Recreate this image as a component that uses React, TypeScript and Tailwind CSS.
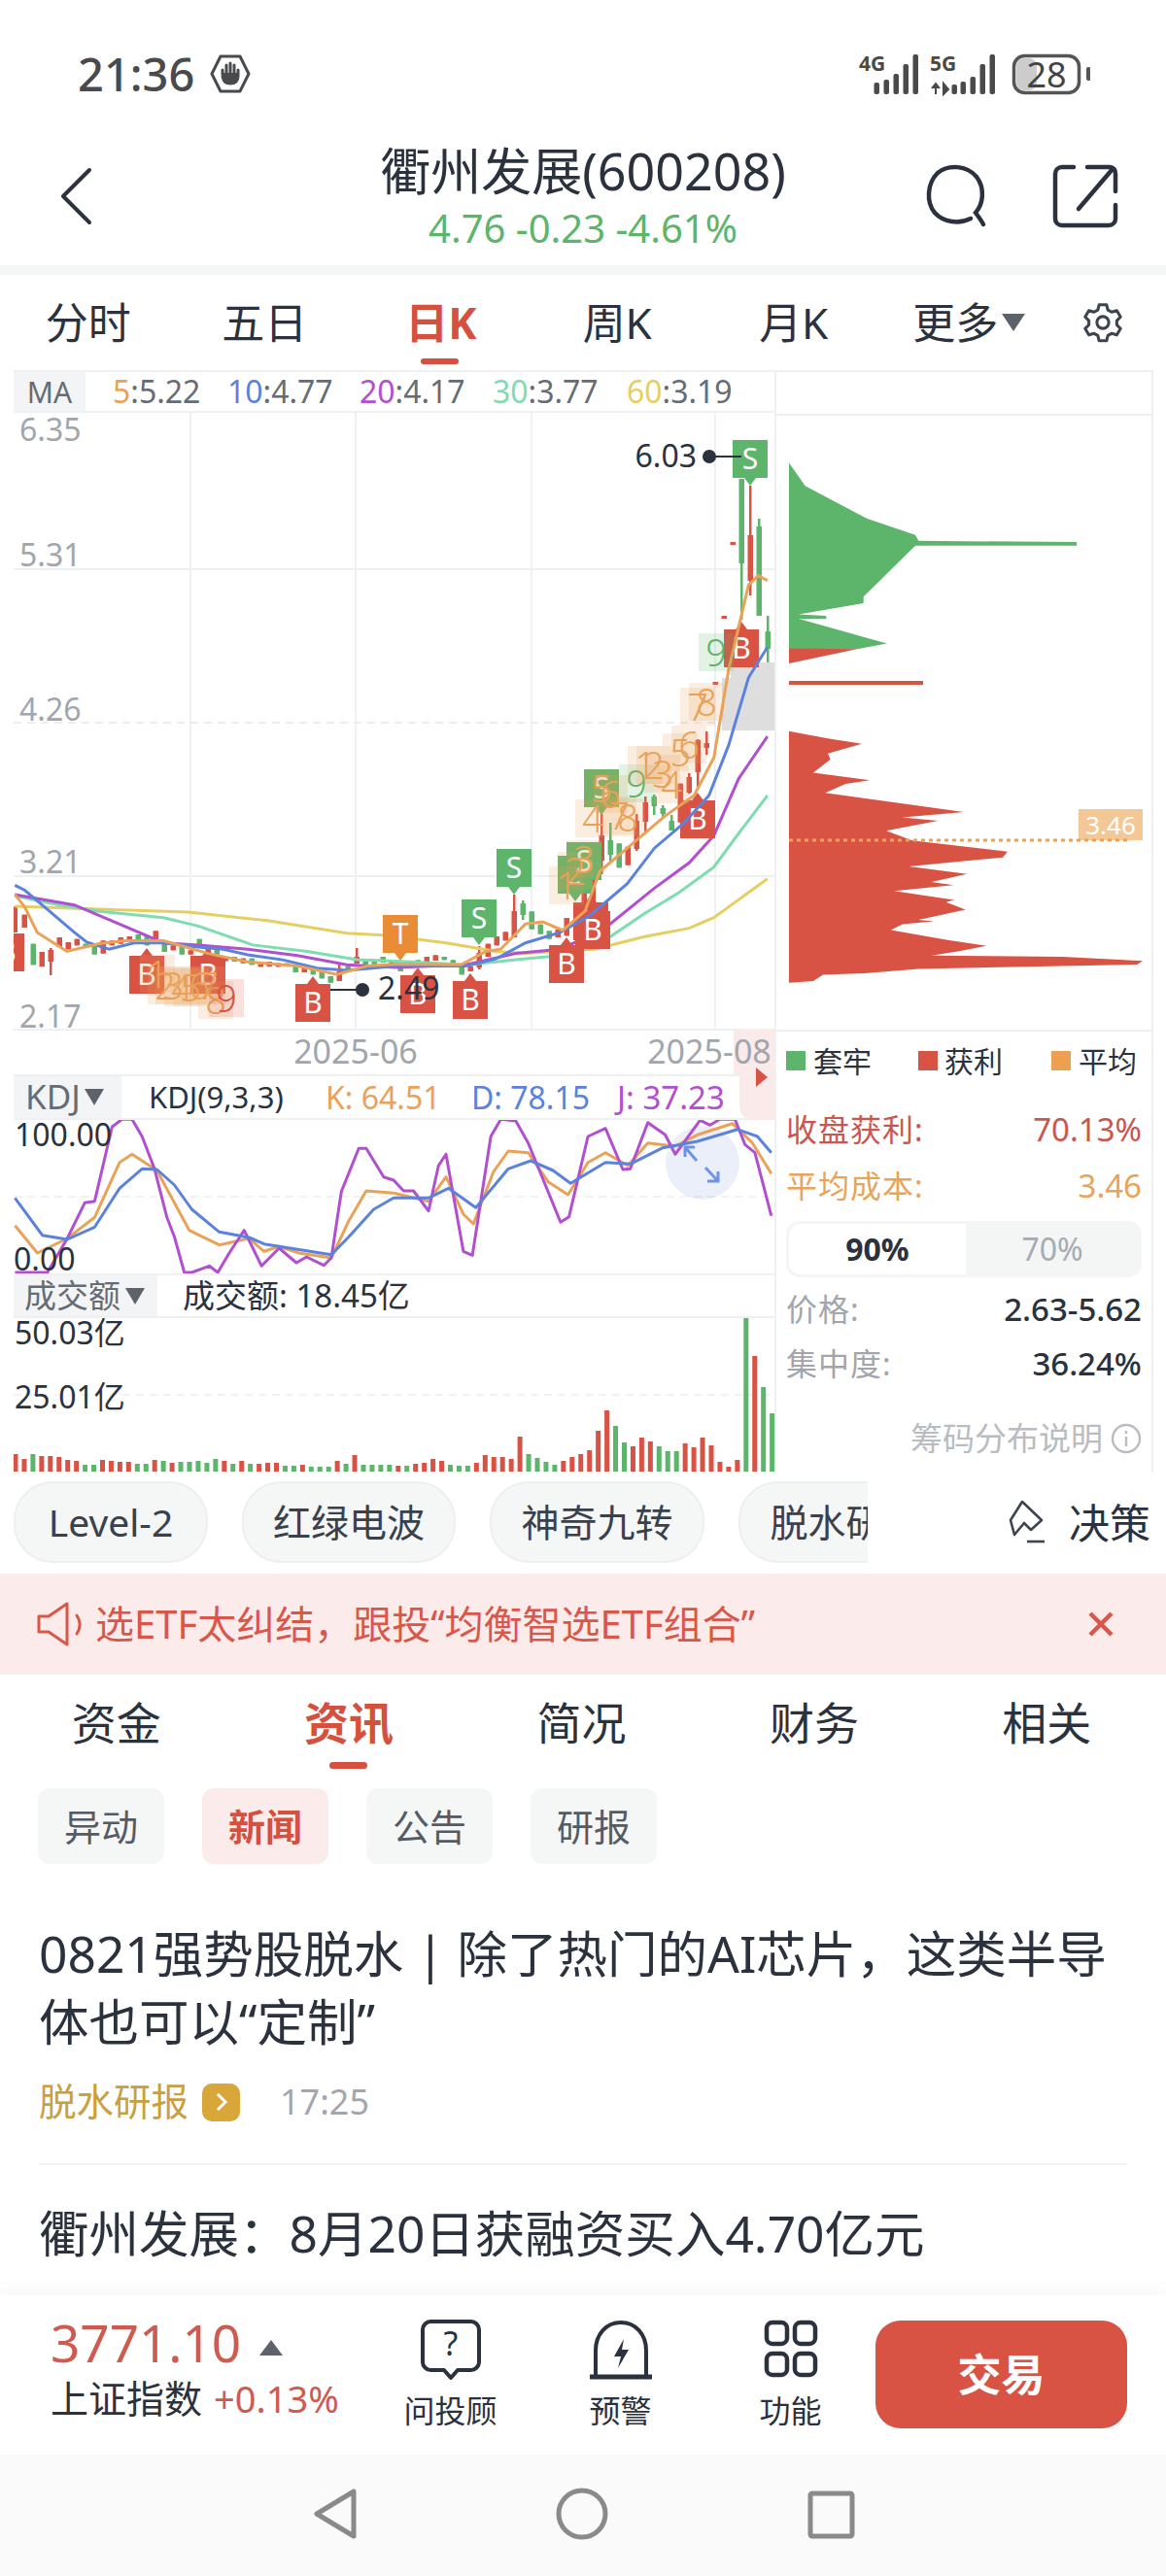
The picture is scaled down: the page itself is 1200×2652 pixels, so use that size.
import React from "react";

const R = "#d95345";
const G = "#5cb56a";
const O = "#e9a258";
const BL = "#5b82dc";
const PU = "#b24fd0";
const TE = "#7fdcb0";
const YE = "#e6cf62";
const INK = "#2b323d";

type P = [number, number];
const z2 = (a: P[]) => a.map(([x, y]) => `${(x / 1.96).toFixed(1)},${(420 + y / 2.306).toFixed(1)}`).join(" ");
const z4 = (a: P[]) => a.map(([x, y]) => `${(x / 1.95).toFixed(1)},${(1090 + y / 3).toFixed(1)}`).join(" ");
const z3 = (a: P[]) => a.map(([x, y]) => `${(780 + x / 3).toFixed(1)},${(380 + y / 2.178).toFixed(1)}`).join(" ");

const ma5: P[] = [[30,1155],[50,1185],[75,1245],[135,1290],[200,1272],[250,1265],[330,1265],[420,1295],[500,1315],[600,1325],[680,1345],[740,1325],[800,1320],[930,1322],[980,1290],[1010,1285],[1060,1225],[1095,1220],[1135,1240],[1180,1195],[1210,1100],[1260,1050],[1340,970],[1400,920],[1440,830],[1470,620],[1510,420],[1530,398],[1548,410]];
const ma10: P[] = [[30,1133],[50,1145],[100,1195],[150,1245],[175,1268],[220,1285],[270,1270],[330,1270],[400,1280],[450,1285],[500,1298],[570,1310],[640,1330],[700,1335],[800,1325],[940,1325],[1000,1308],[1060,1270],[1130,1245],[1190,1205],[1265,1130],[1320,1045],[1380,985],[1430,920],[1470,800],[1510,640],[1548,568]];
const ma20: P[] = [[30,1155],[150,1180],[240,1225],[330,1270],[400,1275],[500,1285],[600,1300],[700,1322],[800,1328],[940,1322],[1040,1295],[1130,1285],[1215,1240],[1320,1140],[1390,1080],[1440,1015],[1490,880],[1548,780]];
const ma30: P[] = [[30,1158],[120,1180],[200,1195],[330,1210],[400,1230],[510,1275],[620,1290],[720,1310],[800,1313],[940,1322],[1040,1310],[1130,1300],[1200,1280],[1300,1200],[1370,1150],[1440,1090],[1490,1010],[1548,920]];
const ma60: P[] = [[30,1183],[200,1190],[380,1197],[540,1217],[700,1247],[780,1252],[900,1270],[1000,1290],[1060,1295],[1200,1285],[1300,1255],[1390,1235],[1440,1210],[1548,1118]];

const kK: P[] = [[30,515],[75,600],[135,555],[190,490],[240,320],[265,295],[315,345],[380,530],[440,575],[500,555],[530,595],[560,580],[600,600],[665,615],[700,500],[735,408],[790,415],[860,440],[895,365],[930,480],[950,510],[990,350],[1020,285],[1060,290],[1100,380],[1140,420],[1180,320],[1215,290],[1260,330],[1300,260],[1355,270],[1400,235],[1470,200],[1510,260],[1548,355]];
const kD: P[] = [[30,430],[85,545],[135,558],[190,520],[240,400],[285,340],[315,342],[350,390],[385,465],[440,535],[500,552],[530,572],[665,605],[700,550],[750,465],[790,430],[860,430],[900,400],[955,460],[1020,340],[1065,315],[1110,345],[1145,385],[1215,320],[1265,325],[1330,275],[1400,255],[1480,218],[1520,240],[1548,290]];
const kJ: P[] = [[30,660],[95,660],[135,555],[170,445],[190,440],[225,210],[245,187],[265,187],[285,240],[310,340],[335,490],[350,550],[370,660],[385,660],[420,640],[437,660],[460,600],[490,530],[525,640],[560,585],[595,630],[615,612],[650,638],[665,615],[685,410],[720,277],[735,277],[770,365],[790,375],[810,408],[830,408],[860,470],[880,330],[895,295],[930,595],[948,607],[985,240],[1005,187],[1035,192],[1060,260],[1125,505],[1142,488],[1180,240],[1215,215],[1250,342],[1265,340],[1300,197],[1335,235],[1355,295],[1405,190],[1425,205],[1445,187],[1475,187],[1495,265],[1515,290],[1548,485]];

// x, top, bottom, colour, optional body top/bottom
type C = [number, number, number, string, number?, number?];
const z10 = (x: number, a: number, b: number, c: string): C => [x, 890 + a / 3, 890 + b / 3, c];
const z11 = z10;
const z9 = (x: number, a: number, b: number, c: string): C => [x, 740 + a / 3, 740 + b / 3, c];
const candles: C[] = [
  z10(15,130,210,R),z10(25,155,195,R),z10(34,245,310,G),z10(43,270,315,R),[52,976,1004,R,978,990],z10(61,225,255,R),z10(70,240,262,R),z10(79,230,250,R),z10(88,245,258,G),z10(97,252,278,G),z10(106,235,275,R),z10(115,235,250,R),z10(124,225,245,R),z10(133,222,235,R),z10(142,216,235,G),z10(151,220,250,G),z10(160,205,235,R),z10(169,245,270,G),z10(178,250,265,R),z10(187,252,278,G),z10(196,265,278,R),z10(205,230,258,G),z10(214,250,270,R),z10(223,262,315,G),z10(232,285,298,R),z10(241,285,300,G),z10(250,290,305,R),z10(259,290,310,G),z10(268,308,316,R),
  z11(277,300,315,R),z11(286,305,316,R),z11(295,305,315,G),z11(304,312,333,G),z11(313,318,333,R),z11(322,322,340,G),z11(331,332,352,G),z11(340,345,365,G),[349,993,1010,R,1000,1010],z11(358,313,330,G),[367,976,992,R,985,992],z11(376,292,310,G),z11(385,295,315,G),z11(394,285,303,G),z11(403,300,310,R),z11(412,312,330,G),z11(421,300,315,R),z11(430,295,310,G),z11(439,285,300,R),z11(448,280,297,R),z11(457,285,295,G),z11(466,295,310,G),z11(475,315,340,G),z11(484,315,330,R),[493,974,998,R,981,996],z11(502,245,285,R),z11(511,222,250,R),z11(520,208,235,R),[529,921,965,R,938,965],[538,927,947,G,930,942],z11(547,145,200,G),
  z9(556,635,665,G),z9(565,655,680,G),z9(574,650,675,R),z9(583,615,670,R),z9(601,528,580,R),[610,873,930,R,885,928],[619,838,900,R,860,886],[628,847,888,G,865,880],z9(637,385,460,G),z9(646,395,452,R),[655,838,876,R,845,874],[664,820,856,R,826,846],[673,818,839,G,820,830],[682,829,842,G,832,838],[691,839,855,G,845,855],z9(700,200,320,R),[709,796,817,R,800,816],[718,761,810,R,762,795],[727,753,777,R,765,770],
  [736,702,705,R],[745,634,637,R],[754,558,561,R],[763,493,638,G,493,580],[772,500,613,R,551,598],[781,534,634,G,542,634],[790,634,682,G,650,668],
];

const labels: [number, number, string, string][] = [
  [162,1003,"1",O],[170,1015,"2",O],[178,1015,"3",O],[187,1017,"4",O],[196,1017,"5",O],[205,1015,"6",O],[214,1015,"7",O],[222,1030,"8",O],[233,1028,"9",R],
  [583,912,"1",O],[592,897,"2",O],[601,885,"3",O],[610,843,"4",O],[619,812,"5",O],[628,818,"6",O],[637,840,"7",O],[646,842,"8",O],[655,807,"9",G],
  [664,788,"1",O],[673,788,"2",O],[682,797,"3",O],[691,808,"4",O],[700,775,"5",O],[709,767,"6",O],[718,728,"7",O],[727,723,"8",O],[737,672,"9",G],
];

const bars: [number, string][] = [[18,R],[13,R],[18,G],[16,R],[16,R],[15,R],[12,R],[11,R],[7,G],[7,G],[12,R],[11,R],[10,R],[10,R],[8,G],[8,G],[12,R],[11,G],[9,R],[10,G],[10,G],[11,G],[9,G],[13,G],[11,R],[8,G],[11,R],[8,G],[8,R],[9,R],[9,R],[6,G],[6,G],[7,R],[5,G],[5,G],[5,G],[11,R],[8,G],[17,R],[7,G],[7,G],[7,G],[7,G],[6,R],[6,G],[8,R],[9,R],[13,R],[11,R],[7,G],[6,G],[6,G],[9,R],[17,R],[15,R],[15,R],[13,R],[36,R],[18,G],[14,G],[10,G],[7,G],[11,R],[15,R],[18,R],[22,R],[42,R],[63,R],[47,G],[30,G],[26,R],[35,R],[31,R],[26,G],[21,G],[21,G],[29,R],[25,R],[35,R],[27,R],[10,R],[5,R],[12,R],[158,G],[119,R],[87,G],[60,G]];

const chipGreen: P[] = [[90,210],[140,262],[330,335],[480,372],[490,385],[978,388],[978,396],[480,396],[320,510],[320,525],[120,550],[205,553],[205,560],[120,560],[392,615],[300,628],[90,628]];
const chipRed1: P[] = [[90,626],[300,628],[90,660]];
const chipRed2: P[] = [[90,812],[210,828],[315,840],[210,862],[218,875],[165,905],[340,922],[265,930],[202,950],[630,993],[440,1005],[550,1013],[390,1035],[470,1057],[765,1082],[750,1095],[460,1115],[640,1132],[530,1150],[598,1157],[415,1170],[600,1190],[575,1195],[635,1212],[490,1235],[537,1238],[440,1245],[405,1258],[580,1280],[700,1293],[615,1305],[530,1315],[935,1318],[1182,1327],[1165,1335],[490,1345],[325,1355],[195,1358],[165,1372],[90,1376]];

function Up({ c, b, t = "B" }: { c: number; b: number; t?: string }) {
  return (
    <g>
      <polygon points={`${c - 18},${b - 39} ${c - 6},${b - 39} ${c},${b - 47} ${c + 6},${b - 39} ${c + 18},${b - 39} ${c + 18},${b} ${c - 18},${b}`} fill={R} />
      <text x={c} y={b - 9} textAnchor="middle" fontSize="30" fill="#fff">{t}</text>
    </g>
  );
}
function Down({ c, t, label = "S", fill = G }: { c: number; t: number; label?: string; fill?: string }) {
  return (
    <g>
      <polygon points={`${c - 18},${t} ${c + 18},${t} ${c + 18},${t + 39} ${c + 6},${t + 39} ${c},${t + 47} ${c - 6},${t + 39} ${c - 18},${t + 39}`} fill={fill} />
      <text x={c} y={t + 30} textAnchor="middle" fontSize="30" fill="#fff">{label}</text>
    </g>
  );
}

function MainChart() {
  const hl = [586, 902, 1060];
  const vl = [196, 366, 547, 736];
  return (
    <svg viewBox="14 425 783 681" width="783" height="681" className="block">
      {hl.map((y) => <line key={y} x1="14" x2="797" y1={y} y2={y} stroke="#eef0f3" strokeWidth="2" />)}
      {vl.map((x) => <line key={x} x1={x} x2={x} y1="425" y2="1060" stroke="#f0f1f5" strokeWidth="2" />)}
      <line x1="14" x2="797" y1="744" y2="744" stroke="#e6e7ea" strokeWidth="1.5" strokeDasharray="8 6" />
      <polygon points="743,698 752,698 752,682 797,682 797,752 743,752" fill="#dedede" />
      <path d="M755 1060H797V1106H755Z" fill="#fbeaea" />

      {[["6.35",454],["5.31",583],["4.26",742],["3.21",899],["2.17",1058]].map(([t,y]) => (
        <text key={t as string} x="20" y={y as number} fontSize="32" fill="#a2a6ac">{t}</text>
      ))}
      <text x="366" y="1095" textAnchor="middle" fontSize="34" fill="#a2a6ac">2025-06</text>
      <text x="730" y="1095" textAnchor="middle" fontSize="34" fill="#a2a6ac">2025-08</text>

      {candles.map(([x, a, b, c, bt, bb], i) => {
        const top = bt ?? a;
        const bot = bb ?? b;
        return (
          <g key={i} fill={c}>
            <rect x={x - 1} y={a} width="2.5" height={b - a} />
            <rect x={x - 2.5} y={top} width="5.5" height={bot - top} />
          </g>
        );
      })}

      <polyline points={z2(ma60)} fill="none" stroke={YE} strokeWidth="3" />
      <polyline points={z2(ma30)} fill="none" stroke={TE} strokeWidth="3" />
      <polyline points={z2(ma20)} fill="none" stroke={PU} strokeWidth="3" />

      <Up c={7} b={1000} />
      <Up c={151} b={1023} />
      <Up c={214} b={1023} />
      <Up c={322} b={1052} />
      <Up c={430} b={1043} />
      <Up c={484} b={1049} />
      <Up c={583} b={1012} />
      <Up c={608} b={968} />
      <Up c={610} b={977} />
      <Up c={718} b={863} />
      <Up c={763} b={687} />
      <Down c={412} t={942} label="T" fill="#e98c35" />
      <Down c={493} t={926} />
      <Down c={529} t={874} />
      <Down c={592} t={881} />
      <Down c={601} t={867} />
      <Down c={619} t={792} />
      <Down c={772} t={453} />

      <polyline points={z2(ma10)} fill="none" stroke={BL} strokeWidth="3" />
      <polyline points={z2(ma5)} fill="none" stroke={O} strokeWidth="3" />

      {labels.map(([x, y, t, c], i) => (
        <g key={i}>
          <rect x={x - 18} y={y - 20} width="36" height="39" fill={c} fillOpacity="0.18" />
          <text x={x} y={y + 14} textAnchor="middle" fontSize="38" fontWeight="300" fill={c}>{t}</text>
        </g>
      ))}

      <line x1="730" x2="763" y1="470" y2="470" stroke={INK} strokeWidth="2" />
      <circle cx="730" cy="470" r="7" fill={INK} />
      <text x="717" y="481" textAnchor="end" fontSize="32" fill={INK}>6.03</text>
      <line x1="340" x2="373" y1="1019" y2="1019" stroke={INK} strokeWidth="2" />
      <circle cx="373" cy="1019" r="7" fill={INK} />
      <text x="389" y="1029" fontSize="32" fill={INK}>2.49</text>
    </svg>
  );
}

function KdjChart() {
  return (
    <svg viewBox="14 1153 783 158" width="783" height="158" className="block">
      <line x1="14" x2="797" y1="1232" y2="1232" stroke="#eceef1" strokeWidth="1.5" strokeDasharray="8 6" />
      <circle cx="723" cy="1197" r="38" fill="#5b82dc" fillOpacity="0.13" />
      <polyline points={z4(kK)} fill="none" stroke={O} strokeWidth="3" strokeLinejoin="round" />
      <polyline points={z4(kJ)} fill="none" stroke={PU} strokeWidth="3" strokeLinejoin="round" />
      <polyline points={z4(kD)} fill="none" stroke={BL} strokeWidth="3" strokeLinejoin="round" />
      <path d="M717 1195L705 1181M705 1191V1181H715M726 1202L739 1216M739 1206V1216H728" fill="none" stroke="#6f93e6" strokeWidth="3" />
      <text x="15" y="1180" fontSize="32" fill={INK}>100.00</text>
      <text x="14" y="1308" fontSize="32" fill={INK}>0.00</text>
    </svg>
  );
}

function VolChart() {
  return (
    <svg viewBox="14 1357 783 159" width="783" height="159" className="block">
      <line x1="14" x2="797" y1="1436" y2="1436" stroke="#eceef1" strokeWidth="1.5" strokeDasharray="8 6" />
      {bars.map(([h, c], i) => (
        <rect key={i} x={13.5 + i * 8.95} y={1515 - h} width="5" height={h} fill={c} />
      ))}
      <text x="15" y="1384" fontSize="32" fill={INK}>50.03亿</text>
      <text x="15" y="1450" fontSize="32" fill={INK}>25.01亿</text>
    </svg>
  );
}

function Chips() {
  return (
    <svg viewBox="797 428 388 632" width="388" height="632" className="block">
      <polygon points={z3(chipGreen)} fill={G} />
      <polygon points={z3(chipRed1)} fill={R} />
      <rect x="810" y="701" width="138" height="4" fill={R} />
      <polygon points={z3(chipRed2)} fill={R} />
      <rect x="1108" y="833" width="66" height="32" fill="#f3c896" />
      <text x="1141" y="859" textAnchor="middle" fontSize="26" fill="#fff">3.46</text>
      <line x1="810" x2="1158" y1="865" y2="865" stroke={O} strokeWidth="3" strokeDasharray="4 4" />
    </svg>
  );
}

function Caret({ big }: { big?: boolean }) {
  return <span className={`inline-block w-0 h-0 border-t-[#5d626b] border-l-transparent border-r-transparent ${big ? "border-l-[12px] border-r-[12px] border-t-[18px]" : "border-l-[10px] border-r-[10px] border-t-[17px]"}`} />;
}

function Tab({ t, active }: { t: string; active?: boolean }) {
  return (
    <div className="w-[181.5px] h-full relative flex items-center justify-center">
      <span className={active ? "text-[44px] font-bold text-[#d6503f]" : "text-[44px] text-[#2b323d]"}>{t}</span>
      {active && <span className="absolute bottom-[6px] left-[70px] w-[39px] h-[6px] rounded-full bg-[#d6503f]" />}
    </div>
  );
}

function Row({ l, v, cl, cv, bold }: { l: string; v: string; cl: string; cv: string; bold?: boolean }) {
  return (
    <div className="flex items-center justify-between h-[30px]">
      <span className={`text-[32px] tracking-[1px] ${cl}`}>{l}</span>
      <span className={`text-[33px] ${bold ? "font-medium" : ""} ${cv}`}>{v}</span>
    </div>
  );
}

function Pill({ t, w }: { t: string; w: string }) {
  return (
    <div className={`shrink-0 h-[84px] ${w} rounded-[40px] border-2 border-[#eeeff0] bg-[#f5f6f6] flex items-center justify-center text-[39px] text-[#3a414c] whitespace-nowrap`}>{t}</div>
  );
}

export default function App() {
  return (
    <div className="w-[1200px] h-[2652px] flex flex-col bg-white overflow-hidden font-['Noto_Sans','Noto_Sans_CJK_SC',sans-serif] text-[#2b323d]">
      {/* status bar */}
      <div className="h-[130px] shrink-0 flex items-start justify-between pt-[48px] pl-[80px] pr-[78px]">
        <div className="flex items-center gap-[16px] h-[56px]">
          <span className="text-[47px] font-medium text-[#484a4d] leading-none">21:36</span>
          <svg width="42" height="42" viewBox="0 0 42 42" fill="none">
            <path d="M11 3H31L40 21L31 39H11L2 21Z" stroke="#484a4d" strokeWidth="3" strokeLinejoin="round" />
            <path d="M13 21V17M17 21V12M21 21V10M25 21V12M29 24V17M13 21C13 28 16 31 21 31C26 31 29 29 29 23" stroke="#484a4d" strokeWidth="3" strokeLinecap="round" />
            <path d="M14 20H28V28L24 31H18L14 27Z" fill="#484a4d" />
          </svg>
        </div>
        <svg width="240" height="60" viewBox="882 50 240 60" className="mt-[2px]">
          <text x="884" y="73" fontSize="21" fontWeight="700" fill="#4a4a4a">4G</text>
          {[[902,85],[912,82],[922,76],[932,66],[942,56]].map(([x,t]) => <rect key={x} x={x-2.5} y={t} width="5.5" height={97-t} rx="2" fill="#4a4a4a" />)}
          <text x="957" y="73" fontSize="21" fontWeight="700" fill="#4a4a4a">5G</text>
          <path d="M963 86V97M959 91L963 86L967 91M971 86V97L976 92Z" stroke="#4a4a4a" strokeWidth="2" fill="#4a4a4a" />
          {[[982,87],[991,84],[1001,79],[1011,66],[1021,56]].map(([x,t]) => <rect key={x} x={x-2.5} y={t} width="5.5" height={97-t} rx="2" fill="#4a4a4a" />)}
          <rect x="1046" y="60" width="21" height="33" rx="8" fill="#cccccc" />
          <rect x="1043.5" y="57.5" width="67" height="38" rx="11" fill="none" stroke="#555" strokeWidth="3.5" />
          <text x="1077" y="90" textAnchor="middle" fontSize="36" fill="#444">28</text>
          <rect x="1118" y="69" width="4.5" height="14" rx="2" fill="#555" />
        </svg>
      </div>

      {/* title */}
      <div className="h-[143px] shrink-0 flex items-start relative">
        <svg width="40" height="62" viewBox="0 0 40 62" fill="none" className="absolute left-[58px] top-[41px]">
          <path d="M34 4L7 31L34 58" stroke="#2b323d" strokeWidth="4" strokeLinecap="round" strokeLinejoin="round" />
        </svg>
        <div className="w-full flex flex-col items-center">
          <div className="text-[52px] leading-[70px] mt-[11px] text-[#2b323d]">衢州发展(600208)</div>
          <div className="text-[40px] leading-[44px] mt-[2px] text-[#5cb56a]">4.76 -0.23 -4.61%</div>
        </div>
        <svg width="70" height="70" viewBox="0 0 70 70" fill="none" className="absolute left-[951px] top-[37px]">
          <path d="M48 58C36 64 20 62 11 52C2 41 3 22 14 11C25 2 44 3 54 15C63 27 61 43 53 52C56 56 59 60 61 64" stroke="#2b323d" strokeWidth="4.5" strokeLinecap="round" />
        </svg>
        <svg width="70" height="70" viewBox="0 0 70 70" fill="none" className="absolute left-[1083px] top-[37px]">
          <path d="M22 5H10C6 5 3 8 3 12V58C3 62 6 65 10 65H58C62 65 65 62 65 58V44M36 5H59C63 5 65 8 65 12V30M62 7L27 48" stroke="#2b323d" strokeWidth="4.5" strokeLinecap="round" strokeLinejoin="round" />
        </svg>
      </div>
      <div className="h-[10px] shrink-0 bg-[#f5f6f6]" />

      {/* period tabs */}
      <div className="h-[98px] shrink-0 flex items-center">
        <Tab t="分时" />
        <Tab t="五日" />
        <Tab t="日K" active />
        <Tab t="周K" />
        <Tab t="月K" />
        <div className="w-[181.5px] h-full flex items-center justify-center gap-[4px] mr-[0px] pr-[2px]">
          <span className="text-[44px]">更多</span>
          <Caret big />
        </div>
        <svg width="46" height="46" viewBox="0 0 24 24" fill="none" stroke="#3d4450" strokeWidth="1.6" strokeLinejoin="round" className="ml-[23px]">
          <path d="M10 2.5h4l.7 2.8 2 1.1 2.8-.8 2 3.4-2 2 .001 2.3 2 2-2 3.4-2.8-.8-2 1.1-.7 2.8h-4l-.7-2.8-2-1.1-2.8.8-2-3.4 2-2V11l-2-2 2-3.4 2.8.8 2-1.1z" />
          <circle cx="12" cy="12" r="3.2" />
        </svg>
      </div>

      {/* chart row */}
      <div className="h-[1135px] shrink-0 flex">
        <div className="w-[783px] ml-[14px] flex flex-col border-t-2 border-[#eef0f2]">
          <div className="h-[42px] flex items-center border-b-2 border-[#eef0f2]">
            <div className="w-[74px] h-full bg-[#f3f4f5] flex items-center justify-center text-[30px] text-[#666c75]">MA</div>
            <div className="flex ml-[28px] text-[#666c75] text-[32px]">
              <span className="w-[118px]"><span className="text-[#e9a258]">5</span>:5.22</span>
              <span className="w-[136px]"><span className="text-[#5b82dc]">10</span>:4.77</span>
              <span className="w-[137px]"><span className="text-[#b24fd0]">20</span>:4.17</span>
              <span className="w-[138px]"><span className="text-[#7fdcb0]">30</span>:3.77</span>
              <span><span className="text-[#e6cf62]">60</span>:3.19</span>
            </div>
          </div>
          <MainChart />
          <div className="h-[47px] flex items-center border-t-2 border-b-2 border-[#eef0f2] relative">
            <div className="w-[111px] h-full bg-[#f3f4f5] flex items-center gap-[4px] pl-[12px] text-[35px] text-[#666c75]">KDJ<Caret /></div>
            <span className="text-[31px] ml-[28px] w-[182px]">KDJ(9,3,3)</span>
            <span className="text-[32px] w-[150px] text-[#e9a258]">K: 64.51</span>
            <span className="text-[32px] w-[150px] text-[#5b82dc]">D: 78.15</span>
            <span className="text-[33px] text-[#b24fd0]">J: 37.23</span>
            <div className="absolute right-0 top-[-2px] w-[36px] h-[47px] bg-[#fbeaea] rounded-bl-[14px]" />
            <span className="absolute right-[7px] top-[-9px] w-0 h-0 border-y-[10px] border-y-transparent border-l-[12px] border-l-[#d95345]" />
          </div>
          <KdjChart />
          <div className="h-[46px] flex items-center border-t-2 border-b-2 border-[#eef0f2]">
            <div className="w-[148px] h-full bg-[#f3f4f5] flex items-center gap-[5px] pl-[11px] text-[33px] text-[#666c75] whitespace-nowrap">成交额<Caret /></div>
            <span className="text-[33px] ml-[26px]">成交额: 18.45亿</span>
          </div>
          <VolChart />
        </div>

        <div className="w-[390px] flex flex-col border-x-2 border-[#eef0f2] border-t-2">
          <div className="h-[45px] border-b-2 border-[#eef0f2] shrink-0" />
          <Chips />
          <div className="flex-1 border-t-2 border-[#eef0f2] px-[10px] flex flex-col">
            <div className="flex items-center h-[60px] text-[30px]">
              <span className="w-[20px] h-[20px] bg-[#5cb56a]" /><span className="ml-[8px] w-[108px]">套牢</span>
              <span className="w-[20px] h-[20px] bg-[#d95345]" /><span className="ml-[7px] w-[110px]">获利</span>
              <span className="w-[20px] h-[20px] bg-[#eda04f]" /><span className="ml-[8px]">平均</span>
            </div>
            <div className="mt-[26px]">
              <Row l="收盘获利:" v="70.13%" cl="text-[#c9574f]" cv="text-[#c9574f]" />
            </div>
            <div className="mt-[28px]">
              <Row l="平均成本:" v="3.46" cl="text-[#e8a45a]" cv="text-[#e8a45a]" />
            </div>
            <div className="mt-[21px] h-[58px] rounded-[14px] bg-[#f4f6f6] p-[3px] flex text-[32px] items-stretch">
              <div className="w-[182px] bg-white rounded-l-[12px] flex items-center justify-center font-bold">90%</div>
              <div className="flex-1 flex items-center justify-center text-[#a7abb0]">70%</div>
            </div>
            <div className="mt-[18px]">
              <Row l="价格:" v="2.63-5.62" cl="text-[#a2a6ac]" cv="text-[#2b323d]" bold />
            </div>
            <div className="mt-[26px]">
              <Row l="集中度:" v="36.24%" cl="text-[#a2a6ac]" cv="text-[#2b323d]" bold />
            </div>
            <div className="mt-[46px] flex items-center justify-end gap-[8px] h-[32px]">
              <span className="text-[33px] text-[#b9bcc1]">筹码分布说明</span>
              <svg width="32" height="32" viewBox="0 0 32 32" fill="none" stroke="#b9bcc1" strokeWidth="2.4">
                <circle cx="16" cy="16" r="14" />
                <path d="M16 14V24M16 8V11" />
              </svg>
            </div>
          </div>
        </div>
      </div>

      {/* pills */}
      <div className="h-[104px] shrink-0 flex pt-[9px]">
        <div className="w-[893px] overflow-hidden flex gap-[35px] pl-[14px] shrink-0">
          <Pill t="Level-2" w="w-[200px]" />
          <Pill t="红绿电波" w="w-[220px]" />
          <Pill t="神奇九转" w="w-[221px]" />
          <Pill t="脱水研报" w="w-[221px]" />
        </div>
        <div className="flex items-center h-[84px] ml-[144px]">
          <svg width="40" height="48" viewBox="0 0 40 48" fill="none" stroke="#3d4450" strokeWidth="2.6" strokeLinejoin="round">
            <path d="M15 3L35 22L24 32L17 25L7 37L3 22Z" />
            <path d="M20 44H38" />
          </svg>
          <span className="text-[42px] ml-[23px] whitespace-nowrap">决策</span>
        </div>
      </div>

      {/* banner */}
      <div className="h-[104px] shrink-0 bg-[#fbeceb] flex items-center text-[#d9574a] relative">
        <svg width="50" height="46" viewBox="0 0 50 46" fill="none" stroke="#d9574a" strokeWidth="3" strokeLinejoin="round" className="ml-[37px] shrink-0">
          <path d="M3 15H13L32 2V44L13 31H3Z" />
          <path d="M42 14C46 20 46 27 42 33" strokeLinecap="round" />
        </svg>
        <span className="text-[40px] ml-[11px] whitespace-nowrap">选ETF太纠结，跟投“均衡智选ETF组合”</span>
        <svg width="28" height="28" viewBox="0 0 28 28" stroke="#d9574a" strokeWidth="4.5" className="absolute left-[1119px] top-[38px]">
          <path d="M3 3L25 25M25 3L3 25" />
        </svg>
      </div>

      {/* section tabs */}
      <div className="h-[102px] shrink-0 grid grid-cols-5 w-[1197px] relative pb-[4px]">
        {["资金", "资讯", "简况", "财务", "相关"].map((t) => (
          <div key={t} className={`flex items-center justify-center text-[46px] ${t === "资讯" ? "font-bold text-[#d6503f]" : ""}`}>{t}</div>
        ))}
        <span className="absolute left-[339px] bottom-[5px] w-[39px] h-[7px] rounded-full bg-[#d6503f]" />
      </div>

      {/* sub tabs */}
      <div className="h-[78px] shrink-0 flex gap-[39px] pl-[39px] mt-[15px]">
        {["异动", "新闻", "公告", "研报"].map((t) => (
          <div key={t} className={`w-[130px] rounded-[12px] flex items-center justify-center text-[38px] ${t === "新闻" ? "bg-[#fbeceb] text-[#d6503f] font-bold" : "bg-[#f5f6f6] text-[#555b64]"}`}>{t}</div>
        ))}
      </div>

      {/* news */}
      <div className="flex-1 min-h-0 overflow-hidden px-[40px] pt-[57px]">
        <div className="text-[51.5px] leading-[70px] w-[1100px]">0821强势股脱水 | 除了热门的AI芯片，这类半导体也可以“定制”</div>
        <div className="flex items-center mt-[28px] h-[40px]">
          <span className="text-[38.5px] text-[#c9a040]">脱水研报</span>
          <span className="ml-[14px] w-[39px] h-[39px] rounded-[10px] bg-[#d9a63a] flex items-center justify-center">
            <svg width="14" height="22" viewBox="0 0 14 22" fill="none" stroke="#fff" strokeWidth="3"><path d="M3 3L11 11L3 19" /></svg>
          </span>
          <span className="ml-[41px] text-[36px] text-[#a3a7ad]">17:25</span>
        </div>
        <div className="h-[2px] bg-[#f2f3f4] mt-[43px]" />
        <div className="text-[51.5px] leading-[70px] mt-[35px] whitespace-nowrap">衢州发展：8月20日获融资买入4.70亿元</div>
      </div>

      {/* bottom bar */}
      <div className="h-[164px] shrink-0 flex items-start bg-white relative shadow-[0_-10px_14px_rgba(0,0,0,0.025)]">
        <div className="w-[376px] pl-[52px] pt-[19px]">
          <div className="flex items-center text-[#cf5a50] text-[53px] leading-[60px]">3771.10
            <span className="ml-[19px] mt-[10px] w-0 h-0 border-x-[12px] border-x-transparent border-b-[16px] border-b-[#5d626b]" />
          </div>
          <div className="flex items-center mt-[2px] leading-[50px]">
            <span className="text-[39px]">上证指数</span>
            <span className="text-[38px] text-[#cf5a50] ml-[12px]">+0.13%</span>
          </div>
        </div>
        <div className="w-[175px] flex flex-col items-center pt-[25px]">
          <svg width="62" height="62" viewBox="0 0 62 62" fill="none" stroke="#2b323d" strokeWidth="4">
            <path d="M10 2H52C56 2 60 6 60 10V44C60 48 56 52 52 52H38L31 60L24 52H10C6 52 2 48 2 44V10C2 6 6 2 10 2Z" strokeLinejoin="round" />
            <text x="31" y="37" textAnchor="middle" fontSize="34" fill="#2b323d" stroke="none">?</text>
          </svg>
          <span className="text-[32px] mt-[14px] leading-[36px]">问投顾</span>
        </div>
        <div className="w-[175px] flex flex-col items-center pt-[25px]">
          <svg width="66" height="62" viewBox="0 0 66 62" fill="none" stroke="#2b323d" strokeWidth="4">
            <path d="M7 58V32C7 15 18 3 33 3C48 3 59 15 59 32V58" />
            <path d="M1 59H65" strokeWidth="5" />
            <path d="M36 20L26 38H33L30 50L41 31H34Z" fill="#2b323d" stroke="none" />
          </svg>
          <span className="text-[32px] mt-[14px] leading-[36px]">预警</span>
        </div>
        <div className="w-[175px] flex flex-col items-center pt-[25px]">
          <svg width="56" height="62" viewBox="0 0 56 62" fill="none" stroke="#2b323d" strokeWidth="4.5">
            <rect x="3" y="3" width="21" height="22" rx="6" />
            <rect x="32" y="3" width="21" height="22" rx="6" />
            <rect x="3" y="35" width="21" height="22" rx="6" />
            <rect x="32" y="35" width="21" height="22" rx="6" />
          </svg>
          <span className="text-[32px] mt-[14px] leading-[36px]">功能</span>
        </div>
        <div className="w-[259px] h-[111px] mt-[26px] rounded-[26px] bg-[#d95345] text-white text-[45px] font-bold flex items-center justify-center">交易</div>
      </div>

      {/* nav */}
      <div className="h-[125px] shrink-0 bg-[#fafafa] relative flex items-center">
        <svg width="1200" height="125" viewBox="0 2527 1200 125" fill="none" stroke="#8a8a8a" strokeWidth="5" strokeLinejoin="round">
          <path d="M364 2565V2611L326 2588Z" />
          <ellipse cx="599" cy="2588" rx="24" ry="24" />
          <rect x="834" y="2567" width="43" height="44" rx="2" />
        </svg>
      </div>
    </div>
  );
}
